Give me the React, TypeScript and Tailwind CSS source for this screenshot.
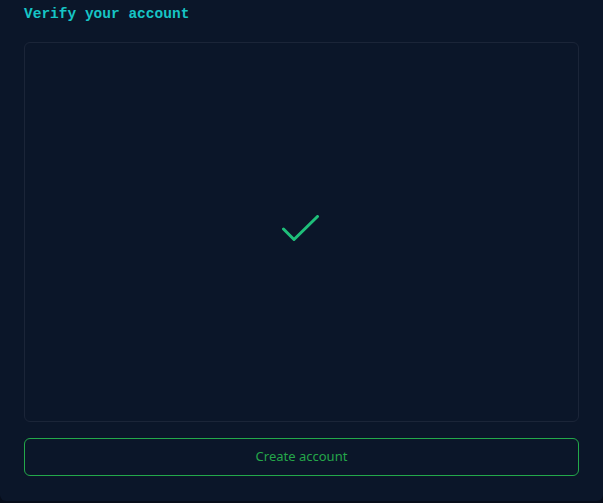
export default function App() {
  return (
    <div className="w-[603px] h-[503px] bg-[#070d1a] overflow-hidden">
      <div className="h-[501px] bg-[#0b1629] rounded-b-[6px] px-6 pt-[5px] flex flex-col">
        <h1
          className="text-[14.5px] font-bold text-[#16c5c5] leading-[18px]"
          style={{ fontFamily: '"Liberation Mono", "DejaVu Sans Mono", monospace' }}
        >
          Verify your account
        </h1>
        <div className="mt-[19px] h-[380px] border border-[#1b2538] rounded-[6px] flex items-center justify-center">
          <svg width="40" height="30" viewBox="0 0 40 30" className="mt-[-5px] ml-[-2px]">
            <path d="M2.5 14 L13 24.5 L36.5 1.5" fill="none" stroke="#1fbf7a" strokeWidth="3" strokeLinecap="round" strokeLinejoin="round" />
          </svg>
        </div>
        <button
          className="mt-[16px] h-[38px] border border-[#23a84a] rounded-[6px] text-[13px] text-[#25a64a] flex items-center justify-center"
          style={{ fontFamily: '"Noto Sans", "Open Sans", sans-serif' }}
        >
          Create account
        </button>
      </div>
    </div>
  );
}
